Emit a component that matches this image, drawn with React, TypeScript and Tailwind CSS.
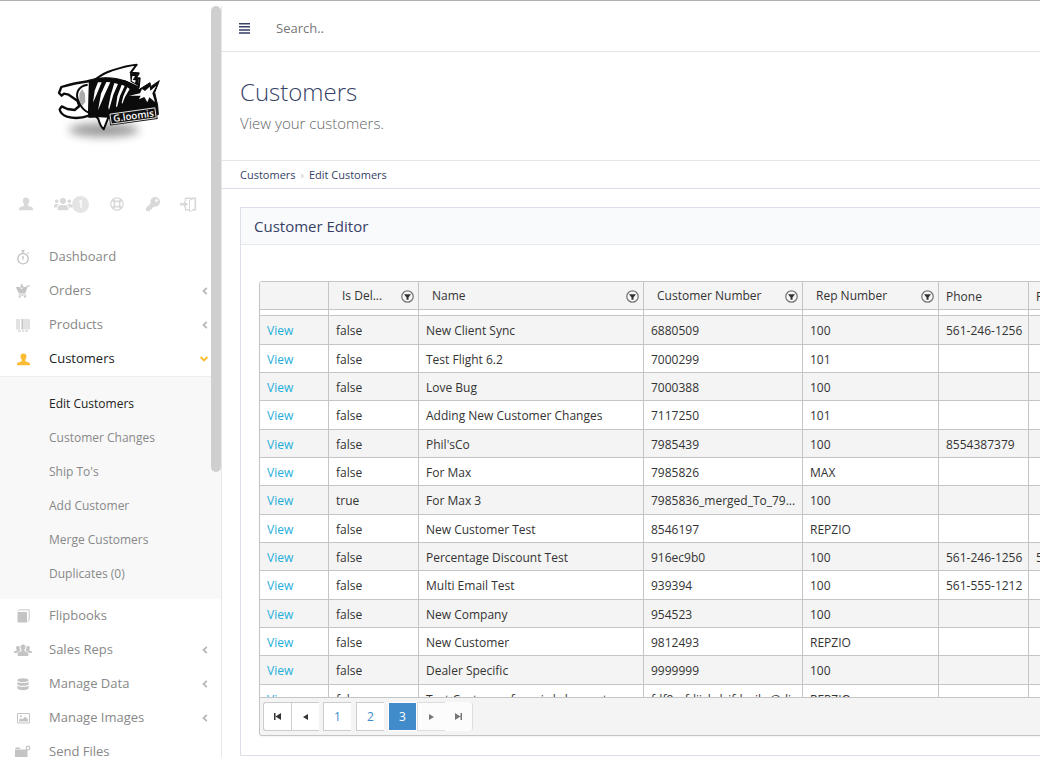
import type { ReactNode } from "react";
import { FaUsers, FaKey, FaRegLifeRing } from "react-icons/fa";

const UserIcon = ({ size = 13 }: { size?: number }) => (
  <svg width={size} height={size} viewBox="0 0 14 14" fill="currentColor">
    <path d="M7 0.5c2.1 0 3.2 1.4 3.2 3.3 0 1.6-.6 2.6-1.2 3.5-.4.7-.2 1.5.6 1.8l2.9 1c1 .4 1.5 1 1.5 2v1.2H0v-1.200c0-1 .5-1.600 1.500-2l2.900-1c.8-.3 1-1.100.6-1.800-.6-.9-1.200-1.900-1.200-3.500C3.800 1.900 4.900.5 7 .5z" />
  </svg>
);

const ExitIcon = () => (
  <svg width="17" height="15" viewBox="0 0 17 15" fill="none" stroke="currentColor">
    <path d="M5.500 4V1.200h10v11.600h-3" strokeWidth="1.400" />
    <path d="M5.500 10v2.800h4" strokeWidth="1.400" />
    <path d="M9.500 3.200l5.500-2v11.600l-5.500 1.700z" strokeWidth="1" />
    <path d="M0 6h4V3.700L8 7.200l-4 3.500V8.400H0z" fill="currentColor" stroke="none" />
  </svg>
);

const TimerIcon = () => (
  <svg width="14" height="15" viewBox="0 0 14 15" fill="none" stroke="currentColor" strokeWidth="1.400">
    <circle cx="7" cy="8.700" r="5.200" />
    <path d="M7 6v3.500M5.500 .8h3M7 1v2M11.500 2.400l1.200 1.200" />
  </svg>
);

const CartIcon = () => (
  <svg width="14" height="14" viewBox="0 0 14 14" fill="currentColor">
    <path d="M0 3h3.700l1.800 2.500L7.500 3h2.700l.7-1.500H14v1h-2.300L9.300 9.600H3L.9 5.500z" />
    <path d="M5.100 0h1.400v2h1.400L5.800 4.500 3.700 2h1.400zM2.500 10.500h7.600v1H2.500z" />
    <circle cx="3.700" cy="12.800" r="1" />
    <circle cx="9" cy="12.800" r="1" />
  </svg>
);

const BarcodeIcon = () => (
  <svg width="14" height="14" viewBox="0 0 14 14" fill="currentColor">
    <path d="M.500 1h1v10.500h-1zM2.500 1h1v10.500h-1zM5.500 1h2v10.500h-2zM8.500 1h1v10.500h-1zM10.500 1h1v10.500h-1zM12.500 1h1v10.500h-1zM2 12.500h3v1H2zM6 12.500h2v1H6zM9 12.500h3v1H9z" />
  </svg>
);

const BookIcon = () => (
  <svg width="13" height="14" viewBox="0 0 13 14" fill="currentColor">
    <path d="M.5 3h9.500v10.500H.5z" />
    <path d="M.8 2.200L2.300.8h9.900v10l-1.500 2" fill="none" stroke="currentColor" strokeWidth=".9" />
  </svg>
);

const GroupIcon = () => (
  <svg width="18" height="13" viewBox="0 0 18 13" fill="currentColor">
    <path d="M9 .5c1.600 0 2.500 1.100 2.500 2.600 0 1.200-.5 2-1 2.700-.3.500-.2 1.100.4 1.400l2.200.9c.8.300 1.200.8 1.200 1.600V12H3.700V9.700c0-.8.400-1.300 1.200-1.600l2.200-.9c.6-.3.700-.9.400-1.400-.5-.7-1-1.500-1-2.700C6.500 1.600 7.400.5 9 .5z" />
    <path d="M4.300 2c.6 0 1 .1 1.300.5-.3 1.700.1 2.800.9 3.900-.7.700-2.900.8-3.300 2.600H0v-.9C0 7.500.4 7.200 1 7l1.400-.5c.5-.2.500-.6.3-1-.4-.5-.7-1-.7-1.800C2 2.600 3 2 4.300 2zM13.700 2c-.6 0-1 .1-1.300.5.3 1.700-.1 2.800-.9 3.900.7.700 2.900.8 3.300 2.600H18v-.9c0-.6-.4-.9-1-1.100l-1.400-.5c-.5-.2-.5-.6-.3-1 .4-.5.700-1 .7-1.800C16 2.600 15 2 13.700 2z" />
  </svg>
);

const DatabaseIcon = () => (
  <svg width="12" height="13" viewBox="0 0 12 13" fill="currentColor">
    <ellipse cx="6" cy="2.200" rx="5.700" ry="2" />
    <path d="M.3 4c1.500 1.400 9.900 1.400 11.400 0v2.200c-.8 2-10.600 2-11.400 0zM.3 7.700c1.500 1.400 9.900 1.400 11.400 0v2.600c-.8 2.600-10.600 2.600-11.400 0z" />
  </svg>
);

const ImageIcon = () => (
  <svg width="13" height="11" viewBox="0 0 13 11" fill="currentColor">
    <path d="M.5.500h12v9.500H.5z" fill="none" stroke="currentColor" />
    <path d="M2 8.500V6.800l2-1.500 1.500 1 2.500-2.800 3 3v2z" />
    <circle cx="3.800" cy="3.300" r="1" />
  </svg>
);

const FolderIcon = () => (
  <svg width="16" height="14" viewBox="0 0 16 14" fill="currentColor">
    <path d="M0 4.500h12.500V14H0zM.5 2.500h4L5.500 4H.5z" />
    <circle cx="13" cy="3" r="1.800" fill="none" stroke="currentColor" strokeWidth="1.200" />
  </svg>
);

const Chevron = ({ open }: { open?: boolean }) =>
  open ? (
    <svg width="8" height="6" viewBox="0 0 8 6" fill="none" stroke="currentColor" strokeWidth="2">
      <path d="M.6 1L4 4.400 7.400 1" />
    </svg>
  ) : (
    <svg width="6" height="8" viewBox="0 0 6 8" fill="none" stroke="currentColor" strokeWidth="1.800">
      <path d="M4.800.8L1.500 4l3.300 3.200" />
    </svg>
  );

const FilterIcon = () => (
  <svg width="13" height="13" viewBox="0 0 13 13">
    <circle cx="6.500" cy="6.500" r="5.700" fill="#f8f8f8" stroke="#777" strokeWidth="1.300" />
    <path d="M3 4.300h7L7.500 7.400V9.800h-2V7.400z" fill="#333" />
  </svg>
);

const Logo = () => (
  <svg width="140" height="110" viewBox="0 0 420 330" role="img" aria-label="G.Loomis">
    <defs>
      <filter id="shade" x="-30%" y="-80%" width="160%" height="260%">
        <feGaussianBlur stdDeviation="15" />
      </filter>
    </defs>
    <ellipse cx="192" cy="240" rx="106" ry="20" fill="#000" opacity=".4" filter="url(#shade)" />
    {/* dorsal fin */}
    <path
      d="M166 88c20-15 32-22 48-26 24-8 48-16 76-18l-18 24 24 2-10 15 13 0-3 27-40-18z"
      fill="#fff"
      stroke="#0b0b0b"
      strokeWidth="6"
      strokeLinejoin="round"
    />
    <path d="M270 70l22 3-9 14 13 0-2 20-22-12z" fill="#0b0b0b" />
    <path d="M277 78l8 0-7 12 9 1-2 8-10-6z" fill="#fff" />
    {/* back and belly */}
    <path
      d="M142 92c50-16 112-12 156 26l32-20 2 12 26-18-14 36 9 38 2 28-152 10-26-3-31 1c-8-30-10-74-4-110z"
      fill="#0b0b0b"
      stroke="#0b0b0b"
      strokeWidth="3"
      strokeLinejoin="round"
    />
    {/* skull and open jaw */}
    <path
      d="M150 93c-30 4-60 10-86 18l-7 18 8 8 7-6 14 3 26 18 6 16-14 12-22-3-17-8-6 9c2 12 10 18 22 22 24 7 46 4 66-3z"
      fill="#fff"
      stroke="#0b0b0b"
      strokeWidth="7"
      strokeLinejoin="round"
    />
    <path d="M143 104c-30 4-38 28-27 51 6 14 14 26 28 32" fill="none" stroke="#0b0b0b" strokeWidth="6" />
    <path d="M118 131l8-14 9 14 1 24-9 12-9-16z" fill="#0b0b0b" opacity=".35" />
    {/* belly fin */}
    <path
      d="M168 199l10 0 28 1-15 38c-10-9-12-17-16-31z"
      fill="#fff"
      stroke="#0b0b0b"
      strokeWidth="6"
      strokeLinejoin="round"
    />
    <g fill="#fff">
      <path d="M174 97l-10 25-5 36 13-30 13-31z" />
      <path d="M199 96l12 1-16 34-21 50 9-50z" />
      <path d="M223 99l11 3-14 32-13 46-2-8 7-36z" />
      <path d="M245 104l9 4-14 30-9 34-3-3 4-30z" />
      <path d="M262 112l7 5-14 24-8 20-2-3 5-20z" />
      <path d="M268 137l32-7 6-13 9 6 14-13 2 12 18-15-12 23 8 26-17-14-6 15-9-16-16 7 5-11z" />
    </g>
    <g transform="rotate(-8 278 196)">
      <path d="M211 183h136v30H211z" fill="#111" stroke="#111" strokeWidth="8" />
      <path d="M211 183h136v30H211z" fill="none" stroke="#fff" strokeWidth="2.500" />
      <text x="219" y="208" fill="#fff" fontSize="29" fontWeight="600" fontFamily="'Open Sans', sans-serif">
        G.loomis
      </text>
    </g>
  </svg>
);

type MenuItem = { name: string; icon: ReactNode; arrow?: boolean };

const topMenu: MenuItem[] = [
  { name: "Dashboard", icon: <TimerIcon /> },
  { name: "Orders", icon: <CartIcon />, arrow: true },
  { name: "Products", icon: <BarcodeIcon />, arrow: true },
];

const bottomMenu: MenuItem[] = [
  { name: "Flipbooks", icon: <BookIcon /> },
  { name: "Sales Reps", icon: <GroupIcon />, arrow: true },
  { name: "Manage Data", icon: <DatabaseIcon />, arrow: true },
  { name: "Manage Images", icon: <ImageIcon />, arrow: true },
  { name: "Send Files", icon: <FolderIcon /> },
];

const subMenu = ["Edit Customers", "Customer Changes", "Ship To's", "Add Customer", "Merge Customers", "Duplicates (0)"];

const columns = [
  { name: "", width: "w-[69px]" },
  { name: "Is Del...", width: "w-[90px]", filter: true },
  { name: "Name", width: "w-[225px]", filter: true },
  { name: "Customer Number", width: "w-[159px]", filter: true },
  { name: "Rep Number", width: "w-[136px]", filter: true },
  { name: "Phone", width: "w-[90px]" },
  { name: "Fax", width: "w-[90px]" },
];

const rows = [
  ["false", "New Client Sync", "6880509", "100", "561-246-1256", ""],
  ["false", "Test Flight 6.2", "7000299", "101", "", ""],
  ["false", "Love Bug", "7000388", "100", "", ""],
  ["false", "Adding New Customer Changes", "7117250", "101", "", ""],
  ["false", "Phil'sCo", "7985439", "100", "8554387379", ""],
  ["false", "For Max", "7985826", "MAX", "", ""],
  ["true", "For Max 3", "7985836_merged_To_79...", "100", "", ""],
  ["false", "New Customer Test", "8546197", "REPZIO", "", ""],
  ["false", "Percentage Discount Test", "916ec9b0", "100", "561-246-1256", "561-246-1256"],
  ["false", "Multi Email Test", "939394", "100", "561-555-1212", ""],
  ["false", "New Company", "954523", "100", "", ""],
  ["false", "New Customer", "9812493", "REPZIO", "", ""],
  ["false", "Dealer Specific", "9999999", "100", "", ""],
  ["false", "Test Customer from js kslocount", "fdf8ssfdjjshdsjfdsgjks@dj", "REPZIO", "", ""],
];

function MenuRow({ item }: { item: MenuItem }) {
  return (
    <li>
      <a href="#" className="flex h-[34px] items-center pr-[13px] text-[13px] text-[#888]">
        <span className="flex w-[46px] justify-center text-[#c4c4c4]">{item.icon}</span>
        <span className="flex-1 pl-[3px]">{item.name}</span>
        {item.arrow && (
          <span className="text-[#b8b8b8]">
            <Chevron />
          </span>
        )}
      </a>
    </li>
  );
}

function Sidebar() {
  return (
    <aside className="relative mt-[5px] w-[222px] shrink-0 overflow-hidden border-r border-[#e4e6ec]">
      <div className="pt-11 pl-10">
        <Logo />
      </div>

      <div className="mt-8 flex h-6 items-center pl-[19px] text-[#d9d9d9]">
        <a href="#" aria-label="Profile" className="w-[35px]">
          <UserIcon size={14} />
        </a>
        <a href="#" aria-label="Users" className="flex w-14 items-center">
          <FaUsers size={18} />
          <span className="flex size-[17px] items-center justify-center rounded-full bg-[#e4e4e4] text-[10px] font-semibold text-white">
            1
          </span>
        </a>
        <a href="#" aria-label="Help" className="w-9">
          <FaRegLifeRing size={14} />
        </a>
        <a href="#" aria-label="Password" className="w-[34px]">
          <FaKey size={14} />
        </a>
        <a href="#" aria-label="Log out">
          <ExitIcon />
        </a>
      </div>

      <nav className="mt-6">
        <ul>
          {topMenu.map((item) => (
            <MenuRow key={item.name} item={item} />
          ))}
          <li>
            <a href="#" className="flex h-[34px] items-center pr-[13px] text-[13px] text-[#222]">
              <span className="flex w-[46px] justify-center text-[#fbbc31]">
                <UserIcon />
              </span>
              <span className="flex-1 pl-[3px]">Customers</span>
              <span className="text-[#fbbc31]">
                <Chevron open />
              </span>
            </a>
            <ul className="border-t border-[#eee] bg-[#f8f8f8] pt-2.5 pb-2">
              {subMenu.map((name, i) => (
                <li key={name}>
                  <a
                    href="#"
                    className={`flex h-[34px] items-center pl-[49px] text-xs ${i === 0 ? "text-[#222]" : "text-[#888]"}`}
                  >
                    {name}
                  </a>
                </li>
              ))}
            </ul>
          </li>
          {bottomMenu.map((item) => (
            <MenuRow key={item.name} item={item} />
          ))}
        </ul>
      </nav>

      {/* scroll thumb */}
      <div className="absolute top-0 right-0 h-[466px] w-2.5 rounded-full bg-[#cfcfcf]" />
    </aside>
  );
}

function Grid() {
  return (
    <div className="w-[1100px] overflow-hidden rounded-[3px] border border-[#c5c5c5] bg-[#f4f4f4] text-xs text-[#333] shadow-xs">
      <div className="h-[415px] overflow-hidden bg-white">
        <table className="w-full table-fixed border-separate border-spacing-0">
          <thead>
            <tr className="bg-[#f4f4f4]">
              {columns.map((col, i) => (
                <th
                  key={i}
                  className={`${col.width} h-7 border-r border-b border-[#c5c5c5] p-0 text-left font-normal`}
                >
                  <div className={`flex items-center justify-between pr-1 ${col.filter ? "pl-[13px]" : "pt-0.5 pl-[7px]"}`}>
                    {col.name}
                    {col.filter && (
                      <button aria-label={`Filter ${col.name}`} className="pt-0.5">
                        <FilterIcon />
                      </button>
                    )}
                  </div>
                </th>
              ))}
              <th className="h-7 border-b border-[#c5c5c5] p-0" />
            </tr>
          </thead>
          <tbody>
            <tr aria-hidden="true">
              {columns.map((_, i) => (
                <td key={i} className="h-1.5 border-r border-b border-[#c5c5c5] p-0" />
              ))}
              <td className="h-1.5 border-b border-[#c5c5c5] p-0" />
            </tr>
            {rows.map((row, i) => (
              <tr key={i} className={i % 2 === 0 ? "bg-[#f4f4f4]" : "bg-white"}>
                <td
                  className={`${i % 3 === 0 ? "h-[29px]" : "h-7"} border-r border-b border-[#c5c5c5] pt-0.5 pb-0 pl-[7px]`}
                >
                  <a href="#" className="text-[#1eaedb]">
                    View
                  </a>
                </td>
                {row.map((cell, j) => (
                  <td key={j} className="truncate border-r border-b border-[#c5c5c5] pt-0.5 pr-0 pb-0 pl-[7px]">
                    {cell}
                  </td>
                ))}
                <td className="border-b border-[#c5c5c5] p-0" />
              </tr>
            ))}
          </tbody>
        </table>
      </div>

      <div className="flex h-[38px] items-center border-t border-[#c5c5c5] pl-[3px] text-[#428bca]">
        <button
          aria-label="First page"
          className="flex h-[29px] w-7 items-center justify-center rounded-l-[3px] border border-r-0 border-[#ccc] bg-white text-[#333]"
        >
          <svg width="7" height="7" viewBox="0 0 7 7" fill="currentColor">
            <path d="M0 0h1.500v7H0zM7 0v7L1.500 3.500z" />
          </svg>
        </button>
        <button
          aria-label="Previous page"
          className="flex h-[29px] w-7 items-center justify-center border border-r-0 border-[#ccc] bg-white text-[#333]"
        >
          <svg width="5" height="6" viewBox="0 0 5 6" fill="currentColor">
            <path d="M5 0v6L0 3z" />
          </svg>
        </button>
        <button className="ml-1 h-[29px] w-7 border border-r-0 border-[#ccc] bg-white">1</button>
        <button className="ml-[5px] h-[29px] w-7 border border-r-0 border-[#ccc] bg-white">2</button>
        <button className="ml-1 h-[29px] w-[29px] border border-white bg-[#428bca] text-white">3</button>
        <button
          aria-label="Next page"
          disabled
          className="flex h-[29px] w-7 items-center justify-center border border-r-0 border-[#ddd] bg-[#fcfcfc] text-[#777]"
        >
          <svg width="5" height="6" viewBox="0 0 5 6" fill="currentColor">
            <path d="M0 0v6l5-3z" />
          </svg>
        </button>
        <button
          aria-label="Last page"
          disabled
          className="flex h-[29px] w-7 items-center justify-center rounded-r-[3px] border-r border-[#ddd] bg-[#fcfcfc] text-[#777]"
        >
          <svg width="7" height="7" viewBox="0 0 7 7" fill="currentColor">
            <path d="M0 0v7l5.500-3.500zM5.500 0H7v7H5.500z" />
          </svg>
        </button>
      </div>
    </div>
  );
}

export default function App() {
  return (
    <div className="flex h-screen overflow-hidden border-t border-[#b0b0b0] bg-white font-['Open_Sans',sans-serif]">
      <Sidebar />
      <main className="min-w-0 flex-1 overflow-hidden text-[#363f66]">
        <header className="flex h-[51px] items-center border-b border-[#e4e6ec] pt-1 pl-[17px]">
          <button aria-label="Toggle menu">
            <svg width="11" height="11" viewBox="0 0 11 11" fill="currentColor">
              <path d="M0 0h11v1.500H0zM0 3.100h11v1.500H0zM0 6.200h11v1.500H0zM0 9.300h11v1.500H0z" />
            </svg>
          </button>
          <input
            type="text"
            aria-label="Search"
            placeholder="Search.."
            className="ml-[26px] flex-1 pt-0.5 text-[13px] outline-none placeholder:text-[#777]"
          />
        </header>

        <div className="h-[109px] border-b border-[#e4e6ec] pt-6 pl-[18px]">
          <h1 className="text-2xl font-light">Customers</h1>
          <p className="mt-[3px] text-[15px] leading-6 font-light text-[#666]">View your customers.</p>
        </div>

        <nav className="flex h-7 items-center gap-[5px] border-b border-[#dcdfe8] pt-0.5 pl-[18px] text-[11px]">
          <a href="#">Customers</a>
          <span className="text-[#bbb]">›</span>
          <a href="#">Edit Customers</a>
        </nav>

        <section className="mt-[18px] ml-[18px] border border-r-0 border-[#dcdfe8]">
          <h2 className="flex h-[37px] items-center border-b border-[#e6e9f0] bg-[#f9fafc] pl-[13px] text-[15px]">
            Customer Editor
          </h2>
          <div className="overflow-hidden pt-9 pb-[19px] pl-[18px]">
            <Grid />
          </div>
        </section>
      </main>
    </div>
  );
}
